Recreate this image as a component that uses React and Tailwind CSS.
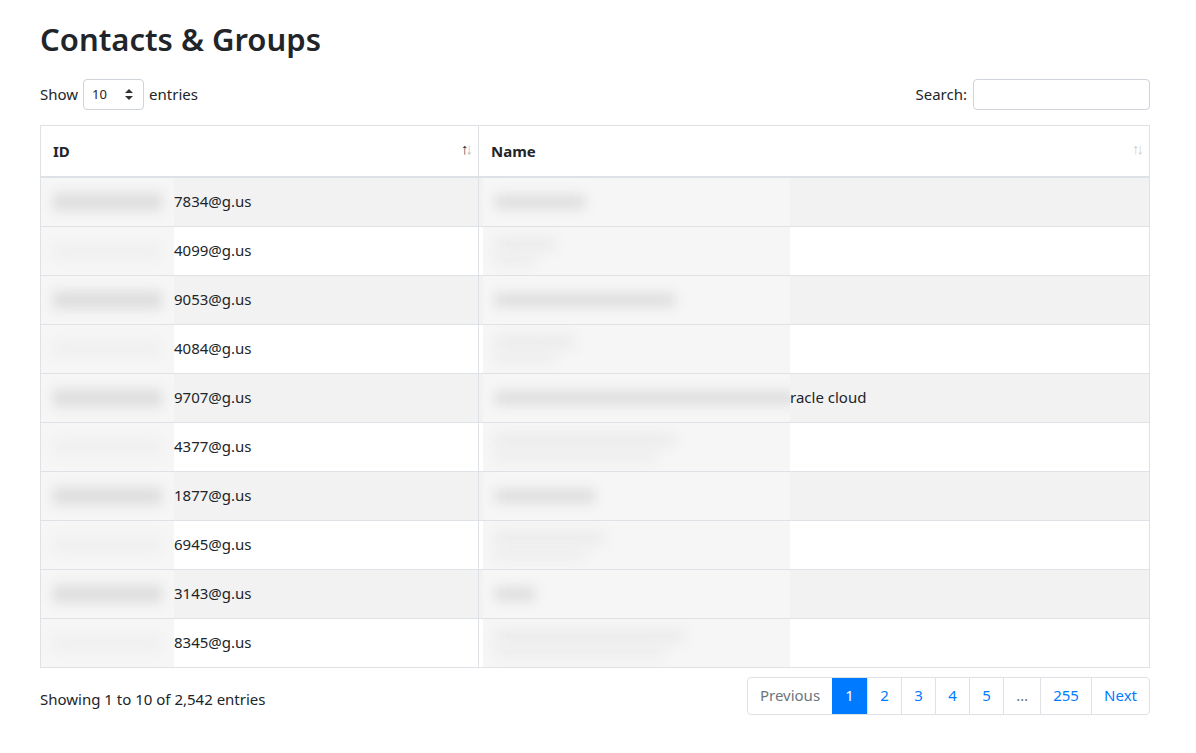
const ids=["7834","4099","9053","4084","9707","4377","1877","6945","3143","8345"];
const nameW=[90,60,180,80,300,180,100,110,40,190];
const two=[false,true,false,true,false,true,false,true,false,true];

function Sort({light}){return <span className={"absolute right-2 top-[15px] text-[15px] leading-none tracking-[-3px] "+(light?"text-[#d0d0d0]":"text-[#bbb]")}><span className={light?"":"text-[#333]"}>↑</span>↓</span>}

export default function App(){
  return (
    <div className="bg-white min-h-[753px] pl-10 pt-[19px] text-[#212529]" style={{fontFamily:'"Segoe UI","Noto Sans","Liberation Sans",sans-serif'}}>
      <div className="w-[1110px]">
      <h1 className="text-[31px] font-semibold leading-[40px] mb-[20px]">Contacts &amp; Groups</h1>
      <div className="flex justify-between items-center text-[15px] mb-[15px]">
        <div className="flex items-center gap-[5px]">Show
          <span className="inline-flex items-center justify-between w-[61px] h-[31px] border border-[#ced4da] rounded pl-2 pr-[10px] text-[13px]">10<svg width="8" height="11" viewBox="0 0 8 11"><path d="M4 0L8 4H0Z M4 11L0 7H8Z" fill="#333"/></svg></span>
          entries</div>
        <div className="flex items-center gap-[6px]">Search:<span className="w-[177px] h-[31px] border border-[#ced4da] rounded inline-block"></span></div>
      </div>
      <table className="w-full border border-[#dee2e6] border-collapse text-[15px]">
        <thead>
          <tr className="h-[51px] border-b-2 border-[#dee2e6]">
            <th className="relative w-[438px] text-left px-3 font-bold border-r border-[#dee2e6]">ID<Sort/></th>
            <th className="relative text-left px-3 font-bold">Name<Sort light/></th>
          </tr>
        </thead>
        <tbody>
          {ids.map((id,i)=>(
            <tr key={id} className={"h-[49px] border-t border-[#dee2e6] "+(i%2===0?"bg-[#f2f2f2]":"bg-white")}>
              <td className="p-0 border-r border-[#dee2e6]">
                <div className="flex items-center h-[48px]">
                  <div className="w-[133px] h-[48px] bg-[#f6f6f6] flex items-center px-3 overflow-hidden"><div className={"w-[110px] h-[18px] blur-[6px] "+(i%2===0?"bg-[#dedede]":"bg-[#f0f0f0]")}></div></div>
                  <span>{id}@g.us</span>
                </div>
              </td>
              <td className="p-0">
                <div className="flex items-center h-[48px] pl-[4px]">
                  <div className="w-[307px] h-[48px] bg-[#f6f6f6] flex flex-col justify-center gap-1 px-3 overflow-hidden">
                    <div className={"h-[14px] blur-[6px] "+(i%2===0?"bg-[#dedede]":"bg-[#ececec]")} style={{width:nameW[i]}}></div>
                    {two[i]&&<div className="h-[10px] blur-[6px] bg-[#ececec]" style={{width:Math.max(40,nameW[i]-20)}}></div>}
                  </div>
                  {i===4&&<span>racle cloud</span>}
                </div>
              </td>
            </tr>
          ))}
        </tbody>
      </table>
      <div className="flex justify-between items-center mt-[9px] text-[15px]">
        <div className="mt-[7px]">Showing 1 to 10 of 2,542 entries</div>
        <div className="flex h-[38px] border border-[#dee2e6] rounded text-[15px]">
          <span className="px-3 flex items-center text-[#6c757d]">Previous</span>
          <span className="w-[35px] flex items-center justify-center bg-[#007bff] text-white">1</span>
          {["2","3","4","5"].map(n=><span key={n} className="w-[34px] flex items-center justify-center text-[#007bff] border-l border-[#dee2e6]">{n}</span>)}
          <span className="w-[37px] flex items-center justify-center text-[#6c757d] border-l border-[#dee2e6]">…</span>
          <span className="w-[51px] flex items-center justify-center text-[#007bff] border-l border-[#dee2e6]">255</span>
          <span className="px-3 flex items-center text-[#007bff] border-l border-[#dee2e6]">Next</span>
        </div>
      </div>
      </div>
    </div>
  );
}
